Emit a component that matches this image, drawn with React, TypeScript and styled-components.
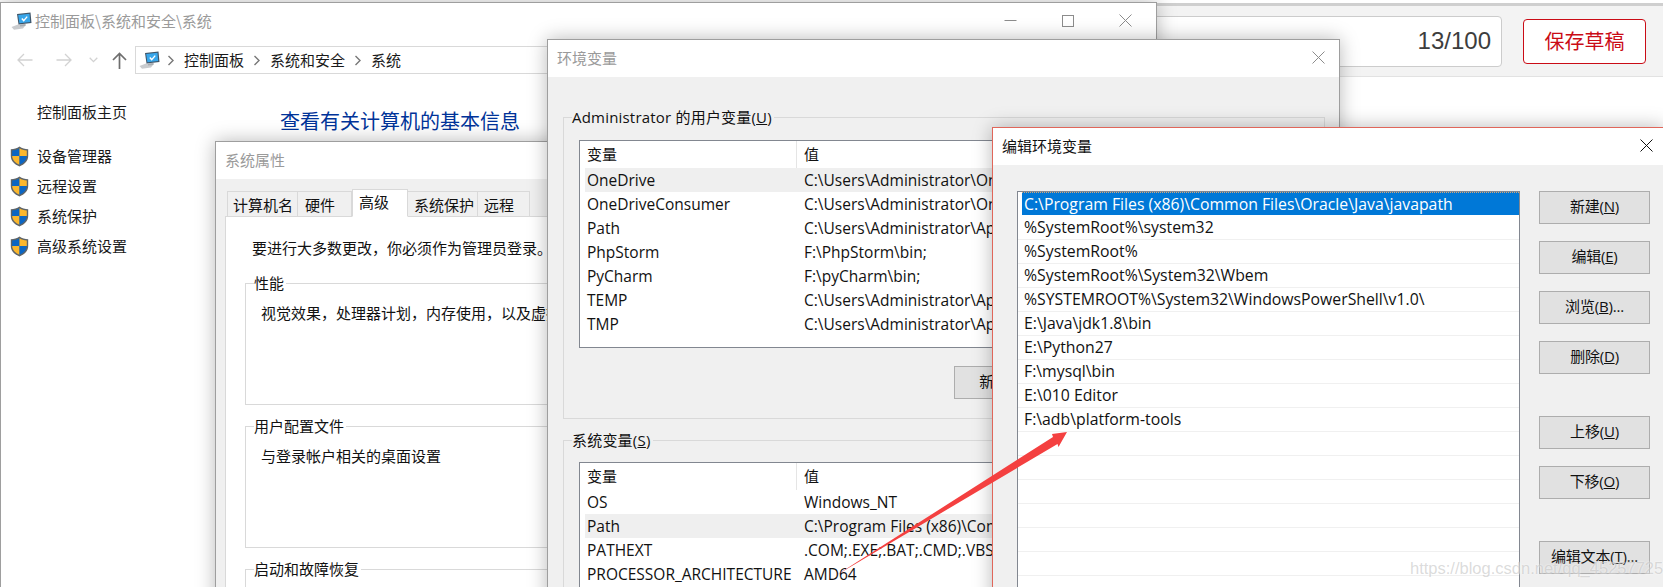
import React from "react";
import styled, { createGlobalStyle } from "styled-components";

const UI = `"Open Sans", "Noto Sans CJK SC", sans-serif`;
const CJK = `"Noto Sans CJK SC", sans-serif`;

const Global = createGlobalStyle`
  html, body { margin: 0; padding: 0; background: #fff; }
  * { box-sizing: border-box; }
`;

const Desktop = styled.div`
  position: relative;
  width: 1663px;
  height: 587px;
  overflow: hidden;
  background: #fff;
  font: 15px/22px ${UI};
  color: #111;
`;

/* page behind the windows */
const TopBar = styled.header`
  margin-top: 3px;
  height: 74px;
  border-top: 3px solid #cfcfcf;
  border-bottom: 1px solid #e2e2e2;
  background: #f3f3f3;
  display: flex;
  justify-content: flex-end;
  align-items: center;
  gap: 21px;
  padding-right: 17px;
`;
const TitleInput = styled.div`
  width: 700px;
  height: 51px;
  background: #fff;
  border: 1px solid #ccc;
  border-radius: 4px;
  display: flex;
  align-items: center;
  justify-content: flex-end;
  padding-right: 10px;
  font: 24px "Liberation Sans", sans-serif;
  color: #3d3d3d;
`;
const SaveButton = styled.button`
  width: 123px;
  height: 45px;
  background: #fff;
  border: 1px solid #ca0c16;
  border-radius: 4px;
  color: #ca0c16;
  font: 20px ${CJK};
  padding: 0 0 2px;
`;

/* windows on the desktop */
const Window = styled.section<{ $x: number; $y: number; $w: number; $h: number; $active?: boolean }>`
  position: absolute;
  left: ${(p) => p.$x}px;
  top: ${(p) => p.$y}px;
  width: ${(p) => p.$w}px;
  height: ${(p) => p.$h}px;
  background: #fff;
  border: 1px solid ${(p) => (p.$active ? "#e0665a" : "#9e9e9e")};
  box-shadow: 0 0 18px rgba(0, 0, 0, 0.28);
  display: flex;
  flex-direction: column;
  overflow: hidden;
`;
const TitleBar = styled.div<{ $pad: number }>`
  flex: none;
  height: 37px;
  background: #fff;
  display: flex;
  align-items: center;
  justify-content: space-between;
  padding: 0 ${(p) => p.$pad}px 2px 9px;
`;
const TitleLeft = styled.div`
  display: flex;
  align-items: center;
  gap: 3px;
  margin-left: 1px;
`;
const TitleText = styled.span<{ $active?: boolean }>`
  font: 15px/22px ${CJK};
  color: ${(p) => (p.$active ? "#111" : "#9a9a9a")};
  white-space: nowrap;
`;
const WinControls = styled.div`
  display: flex;
  align-items: center;
  gap: 45px;
`;

const NavRow = styled.nav`
  flex: none;
  display: grid;
  grid-template-columns: 39px 39px 20px 32px 1fr;
  align-items: center;
  padding: 6px 0 0 4px;
  height: 34px;
`;
const NavCell = styled.span`
  display: flex;
  justify-content: center;
`;
const AddressBar = styled.div`
  height: 28px;
  width: 1000px;
  border: 1px solid #d9d9d9;
  display: flex;
  align-items: center;
  gap: 9px;
  padding-left: 3px;
  font: 15px/22px ${CJK};
  color: #1a1a1a;
`;
const AddressIcon = styled.span`
  display: flex;
  margin-right: -2px;
`;
const PanelBody = styled.div`
  display: flex;
`;
const Sidebar = styled.aside`
  flex: none;
  width: 279px;
  padding-top: 23px;
  font-family: ${CJK};
`;
const SideHome = styled.div`
  line-height: 30px;
  padding-left: 36px;
  margin-bottom: 14px;
  color: #1a1a1a;
`;
const SideLink = styled.div`
  height: 30px;
  display: flex;
  align-items: center;
  gap: 8px;
  padding-left: 9px;
  color: #1a1a1a;
`;
const Heading = styled.h1`
  margin: 32px 0 0;
  font: 400 20px/30px ${CJK};
  color: #003399;
`;

/* system properties */
const GrayBody = styled.div`
  flex: 1;
  background: #f0f0f0;
  min-height: 0;
`;
const SysBody = styled(GrayBody)`
  padding: 10px 0 0 9px;
  display: flex;
  flex-direction: column;
`;
const TabRow = styled.div`
  flex: none;
  display: flex;
  align-items: flex-end;
  padding-left: 2px;
  height: 28px;
  margin-bottom: -1px;
  position: relative;
  z-index: 1;
  font-family: ${CJK};
`;
const Tab = styled.div<{ $w: number; $active?: boolean }>`
  width: ${(p) => p.$w}px;
  height: ${(p) => (p.$active ? 28 : 26)}px;
  background: ${(p) => (p.$active ? "#fff" : "#f0f0f0")};
  border: 1px solid #d9d9d9;
  border-left-width: ${(p) => (p.$active ? 1 : 0)}px;
  border-bottom-color: ${(p) => (p.$active ? "#fff" : "#d9d9d9")};
  padding-left: 6px;
  line-height: ${(p) => (p.$active ? 24 : 25)}px;
  &:first-child { border-left-width: 1px; padding-left: 5px; }
  &:nth-child(2) { padding-left: 7px; }
`;
const TabPanel = styled.div`
  flex: 1;
  background: #fff;
  border: 1px solid #d9d9d9;
  padding: 20px 0 0 19px;
  font-family: ${CJK};
  white-space: nowrap;
`;
const Note = styled.p`
  margin: 0 0 24px;
  padding-left: 7px;
`;
const SysGroup = styled.div`
  position: relative;
  width: 500px;
  height: 122px;
  border: 1px solid #d9d9d9;
  padding: 18px 0 0 15px;
  margin-bottom: 21px;
`;
const Legend = styled.span`
  position: absolute;
  left: 8px;
  top: -12px;
  padding: 0 2px 0 0;
  background: #fff;
  white-space: nowrap;
`;
const EnvLegend = styled(Legend)`
  background: #f0f0f0;
  letter-spacing: 0.2px;
`;

/* environment variables */
const EnvBody = styled(GrayBody)`
  padding: 40px 0 0 15px;
`;
const EnvGroup = styled.div<{ $top: number; $h: number }>`
  position: relative;
  width: 762px;
  height: ${(p) => p.$h}px;
  border: 1px solid #d9d9d9;
  padding: ${(p) => p.$top}px 0 0 15px;
  margin-bottom: 21px;
`;
const VarList = styled.div<{ $h: number }>`
  width: 730px;
  height: ${(p) => p.$h}px;
  background: #fff;
  border: 1px solid #828790;
  overflow: hidden;
  white-space: nowrap;
`;
const VarRow = styled.div<{ $head?: boolean; $selected?: boolean }>`
  display: grid;
  grid-template-columns: 212px 1fr;
  height: ${(p) => (p.$head ? 27 : 24)}px;
  line-height: ${(p) => (p.$head ? 27 : 24)}px;
  font-size: ${(p) => (p.$head ? 15 : 15.5)}px;
  margin-left: 5px;
  background: ${(p) => (p.$selected ? "#efefef" : "transparent")};
`;
const NameCell = styled.span<{ $head?: boolean }>`
  padding-left: 2px;
  overflow: hidden;
  border-right: ${(p) => (p.$head ? "1px solid #e5e5e5" : "0")};
`;
const ValueCell = styled.span`
  padding-left: 7px;
  overflow: hidden;
`;
const EnvButtons = styled.div`
  display: flex;
  justify-content: flex-end;
  gap: 11px;
  width: 730px;
  margin-top: 18px;
`;
const WinButton = styled.button`
  width: 111px;
  height: 33px;
  flex: none;
  padding: 0 0 3px;
  background: #e1e1e1;
  border: 1px solid #adadad;
  color: #111;
  font: 15px/22px ${UI};
  white-space: nowrap;
  letter-spacing: -0.2px;
`;
const Key = styled.span`
  text-decoration: underline;
`;

/* edit variable */
const EditBody = styled(GrayBody)`
  display: flex;
  align-items: flex-start;
  padding: 26px 0 0 24px;
  gap: 19px;
`;
const PathList = styled.div`
  flex: none;
  width: 503px;
  height: 420px;
  background: #fff;
  border: 1px solid #828790;
  white-space: nowrap;
`;
const PathRow = styled.div<{ $selected?: boolean }>`
  height: 24px;
  line-height: 23px;
  font-size: 15.8px;
  margin-left: ${(p) => (p.$selected ? 4 : 0)}px;
  padding-left: ${(p) => (p.$selected ? 2 : 6)}px;
  color: ${(p) => (p.$selected ? "#fff" : "#111")};
  background: ${(p) => (p.$selected ? "#0078d7" : "transparent")};
  border-bottom: 1px solid ${(p) => (p.$selected ? "#fff" : "#f0f0f0")};
  border-top: ${(p) => (p.$selected ? "1px dotted #d9a878" : "0")};
`;
const ButtonColumn = styled.div`
  display: flex;
  flex-direction: column;
  gap: 42px;
`;
const ButtonStack = styled.div`
  display: flex;
  flex-direction: column;
  gap: 17px;
`;

/* overlays */
const ArrowLayer = styled.svg`
  position: absolute;
  left: 0;
  top: 0;
  pointer-events: none;
`;
const Watermark = styled.span`
  position: absolute;
  left: 1410px;
  top: 558px;
  font: 16.5px/20px "Liberation Sans", sans-serif;
  color: rgba(175, 175, 175, 0.45);
  text-shadow: 0 0 2px rgba(255, 255, 255, 0.9);
  white-space: nowrap;
`;

const Shield = () => (
  <svg width="19" height="21" viewBox="0 0 19 21">
    <path d="M9.5 0.6 C7 2.4 4 3.2 0.8 3.2 V10 C0.8 15 4.5 18.4 9.5 20.4 C14.5 18.4 18.2 15 18.2 10 V3.2 C15 3.2 12 2.4 9.5 0.6Z" fill="#5e6468" />
    <path d="M9.5 2.2 C7.4 3.6 5 4.3 2.2 4.4 V10 H9.5Z" fill="#0b66c3" />
    <path d="M9.5 2.2 C11.6 3.6 14 4.3 16.8 4.4 V10 H9.5Z" fill="#fbb72d" />
    <path d="M2.2 10 H9.5 V18.8 C5.2 17 2.4 14 2.2 10Z" fill="#fbb72d" />
    <path d="M16.8 10 H9.5 V18.8 C13.8 17 16.6 14 16.8 10Z" fill="#0b66c3" />
  </svg>
);

const Computer = () => (
  <svg width="21" height="18" viewBox="0 0 21 18">
    <path d="M0.5 15 L7 12.5 L15 12.5 L12 16.5 L3 17.8Z" fill="#c9cbce" />
    <path d="M6 2 L19.5 0.5 L20.5 11 L7.5 12.5Z" fill="#3f5568" />
    <path d="M7.2 3 L18.5 1.8 L19.2 9.9 L8.4 11.2Z" fill="#38a6ea" />
    <path d="M10.8 6.6 L12.7 8.6 L16.2 4.6" fill="none" stroke="#fff" strokeWidth="1.4" />
    <path d="M9 12.5 L14.5 12 L14.5 14 L9 14.5Z" fill="#a8adb2" />
  </svg>
);

const NavArrow = ({ flip, color }: { flip?: boolean; color: string }) => (
  <svg width="16" height="14" viewBox="0 0 16 14" style={flip ? { transform: "scaleX(-1)" } : undefined}>
    <path d="M1 7 H15.5 M7 1 L1 7 L7 13" fill="none" stroke={color} strokeWidth="1.3" />
  </svg>
);

const NavDown = () => (
  <svg width="9" height="6" viewBox="0 0 9 6">
    <path d="M0.7 0.8 L4.5 4.6 L8.3 0.8" fill="none" stroke="#d2d2d2" strokeWidth="1.3" />
  </svg>
);

const NavUp = () => (
  <svg width="15" height="17" viewBox="0 0 15 17">
    <path d="M7.5 17 V1.5 M1 8 L7.5 1.5 L14 8" fill="none" stroke="#6e6e6e" strokeWidth="1.7" />
  </svg>
);

const Crumb = () => (
  <svg width="8" height="11" viewBox="0 0 8 11">
    <path d="M1.5 1 L6 5.5 L1.5 10" fill="none" stroke="#777" strokeWidth="1.4" />
  </svg>
);

const CloseX = ({ color }: { color: string }) => (
  <svg width="13" height="13" viewBox="0 0 13 13">
    <path d="M0.5 0.5 L12.5 12.5 M12.5 0.5 L0.5 12.5" stroke={color} strokeWidth="1" fill="none" />
  </svg>
);

const userVars = [
  ["OneDrive", "C:\\Users\\Administrator\\OneDrive"],
  ["OneDriveConsumer", "C:\\Users\\Administrator\\OneDrive"],
  ["Path", "C:\\Users\\Administrator\\AppData\\Local\\Microsoft\\WindowsApps"],
  ["PhpStorm", "F:\\PhpStorm\\bin;"],
  ["PyCharm", "F:\\pyCharm\\bin;"],
  ["TEMP", "C:\\Users\\Administrator\\AppData\\Local\\Temp"],
  ["TMP", "C:\\Users\\Administrator\\AppData\\Local\\Temp"],
];
const sysVars = [
  ["OS", "Windows_NT"],
  ["Path", "C:\\Program Files (x86)\\Common Files\\Oracle\\Java\\javapath"],
  ["PATHEXT", ".COM;.EXE;.BAT;.CMD;.VBS;.VBE;.JS;.JSE;.WSF;.WSH;.MSC"],
  ["PROCESSOR_ARCHITECTURE", "AMD64"],
];
const paths = [
  "C:\\Program Files (x86)\\Common Files\\Oracle\\Java\\javapath",
  "%SystemRoot%\\system32",
  "%SystemRoot%",
  "%SystemRoot%\\System32\\Wbem",
  "%SYSTEMROOT%\\System32\\WindowsPowerShell\\v1.0\\",
  "E:\\Java\\jdk1.8\\bin",
  "E:\\Python27",
  "F:\\mysql\\bin",
  "E:\\010 Editor",
  "F:\\adb\\platform-tools",
  "", "", "", "", "", "", "",
];
const tabs: [string, number][] = [
  ["计算机名", 71],
  ["硬件", 54],
  ["高级", 56],
  ["系统保护", 70],
  ["远程", 52],
];
const sideLinks = ["设备管理器", "远程设置", "系统保护", "高级系统设置"];

const Vars = ({ rows, selected, h }: { rows: string[][]; selected: string; h: number }) => (
  <VarList $h={h}>
    <VarRow $head>
      <NameCell $head>变量</NameCell>
      <ValueCell>值</ValueCell>
    </VarRow>
    {rows.map(([n, v]) => (
      <VarRow key={n} $selected={n === selected}>
        <NameCell>{n}</NameCell>
        <ValueCell>{v}</ValueCell>
      </VarRow>
    ))}
  </VarList>
);

export default function App() {
  return (
    <Desktop>
      <Global />
      <TopBar>
        <TitleInput>13/100</TitleInput>
        <SaveButton>保存草稿</SaveButton>
      </TopBar>

      <Window $x={0} $y={2} $w={1157} $h={600}>
        <TitleBar $pad={24}>
          <TitleLeft>
            <Computer />
            <TitleText>控制面板\系统和安全\系统</TitleText>
          </TitleLeft>
          <WinControls>
            <svg width="13" height="13" viewBox="0 0 13 13">
              <path d="M0.5 6.5 H12.5" stroke="#8c8c8c" strokeWidth="1" />
            </svg>
            <svg width="12" height="12" viewBox="0 0 12 12">
              <rect x="0.5" y="0.5" width="11" height="11" fill="none" stroke="#8c8c8c" strokeWidth="1" />
            </svg>
            <CloseX color="#8c8c8c" />
          </WinControls>
        </TitleBar>
        <NavRow>
          <NavCell><NavArrow color="#d2d2d2" /></NavCell>
          <NavCell><NavArrow flip color="#d2d2d2" /></NavCell>
          <NavCell><NavDown /></NavCell>
          <NavCell><NavUp /></NavCell>
          <AddressBar>
            <AddressIcon><Computer /></AddressIcon>
            <Crumb />
            <span>控制面板</span>
            <Crumb />
            <span>系统和安全</span>
            <Crumb />
            <span>系统</span>
          </AddressBar>
        </NavRow>
        <PanelBody>
          <Sidebar>
            <SideHome>控制面板主页</SideHome>
            {sideLinks.map((l) => (
              <SideLink key={l}>
                <Shield />
                {l}
              </SideLink>
            ))}
          </Sidebar>
          <Heading>查看有关计算机的基本信息</Heading>
        </PanelBody>
      </Window>

      <Window $x={215} $y={141} $w={560} $h={470}>
        <TitleBar $pad={10}>
          <TitleText>系统属性</TitleText>
        </TitleBar>
        <SysBody>
          <TabRow>
            {tabs.map(([t, w]) => (
              <Tab key={t} $w={w} $active={t === "高级"}>{t}</Tab>
            ))}
          </TabRow>
          <TabPanel>
            <Note>要进行大多数更改，你必须作为管理员登录。</Note>
            <SysGroup>
              <Legend>性能</Legend>
              视觉效果，处理器计划，内存使用，以及虚拟内存
            </SysGroup>
            <SysGroup>
              <Legend>用户配置文件</Legend>
              与登录帐户相关的桌面设置
            </SysGroup>
            <SysGroup>
              <Legend>启动和故障恢复</Legend>
            </SysGroup>
          </TabPanel>
        </SysBody>
      </Window>

      <Window $x={547} $y={39} $w={793} $h={570}>
        <TitleBar $pad={14}>
          <TitleText>环境变量</TitleText>
          <CloseX color="#8c8c8c" />
        </TitleBar>
        <EnvBody>
          <EnvGroup $top={22} $h={302}>
            <EnvLegend>Administrator 的用户变量(<Key>U</Key>)</EnvLegend>
            <Vars rows={userVars} selected="OneDrive" h={208} />
            <EnvButtons>
              <WinButton>新建(<Key>N</Key>)...</WinButton>
              <WinButton>编辑(<Key>E</Key>)...</WinButton>
              <WinButton>删除(<Key>D</Key>)</WinButton>
            </EnvButtons>
          </EnvGroup>
          <EnvGroup $top={21} $h={200}>
            <EnvLegend>系统变量(<Key>S</Key>)</EnvLegend>
            <Vars rows={sysVars} selected="Path" h={180} />
          </EnvGroup>
        </EnvBody>
      </Window>

      <Window $x={992} $y={127} $w={672} $h={480} $active>
        <TitleBar $pad={10}>
          <TitleText $active>编辑环境变量</TitleText>
          <CloseX color="#111" />
        </TitleBar>
        <EditBody>
          <PathList>
            {paths.map((p, i) => (
              <PathRow key={i} $selected={i === 0}>{p}</PathRow>
            ))}
          </PathList>
          <ButtonColumn>
            <ButtonStack>
              <WinButton>新建(<Key>N</Key>)</WinButton>
              <WinButton>编辑(<Key>E</Key>)</WinButton>
              <WinButton>浏览(<Key>B</Key>)...</WinButton>
              <WinButton>删除(<Key>D</Key>)</WinButton>
            </ButtonStack>
            <ButtonStack>
              <WinButton>上移(<Key>U</Key>)</WinButton>
              <WinButton>下移(<Key>O</Key>)</WinButton>
            </ButtonStack>
            <WinButton>编辑文本(<Key>T</Key>)...</WinButton>
          </ButtonColumn>
        </EditBody>
      </Window>

      <ArrowLayer width="1663" height="587" viewBox="0 0 1663 587">
        <polygon points="835,576 1053,437 1052,434 1067,432 1058.5,447 1057.5,444" fill="#f44040" />
      </ArrowLayer>
      <Watermark>https://blog.csdn.net/qq_45257725</Watermark>
    </Desktop>
  );
}
